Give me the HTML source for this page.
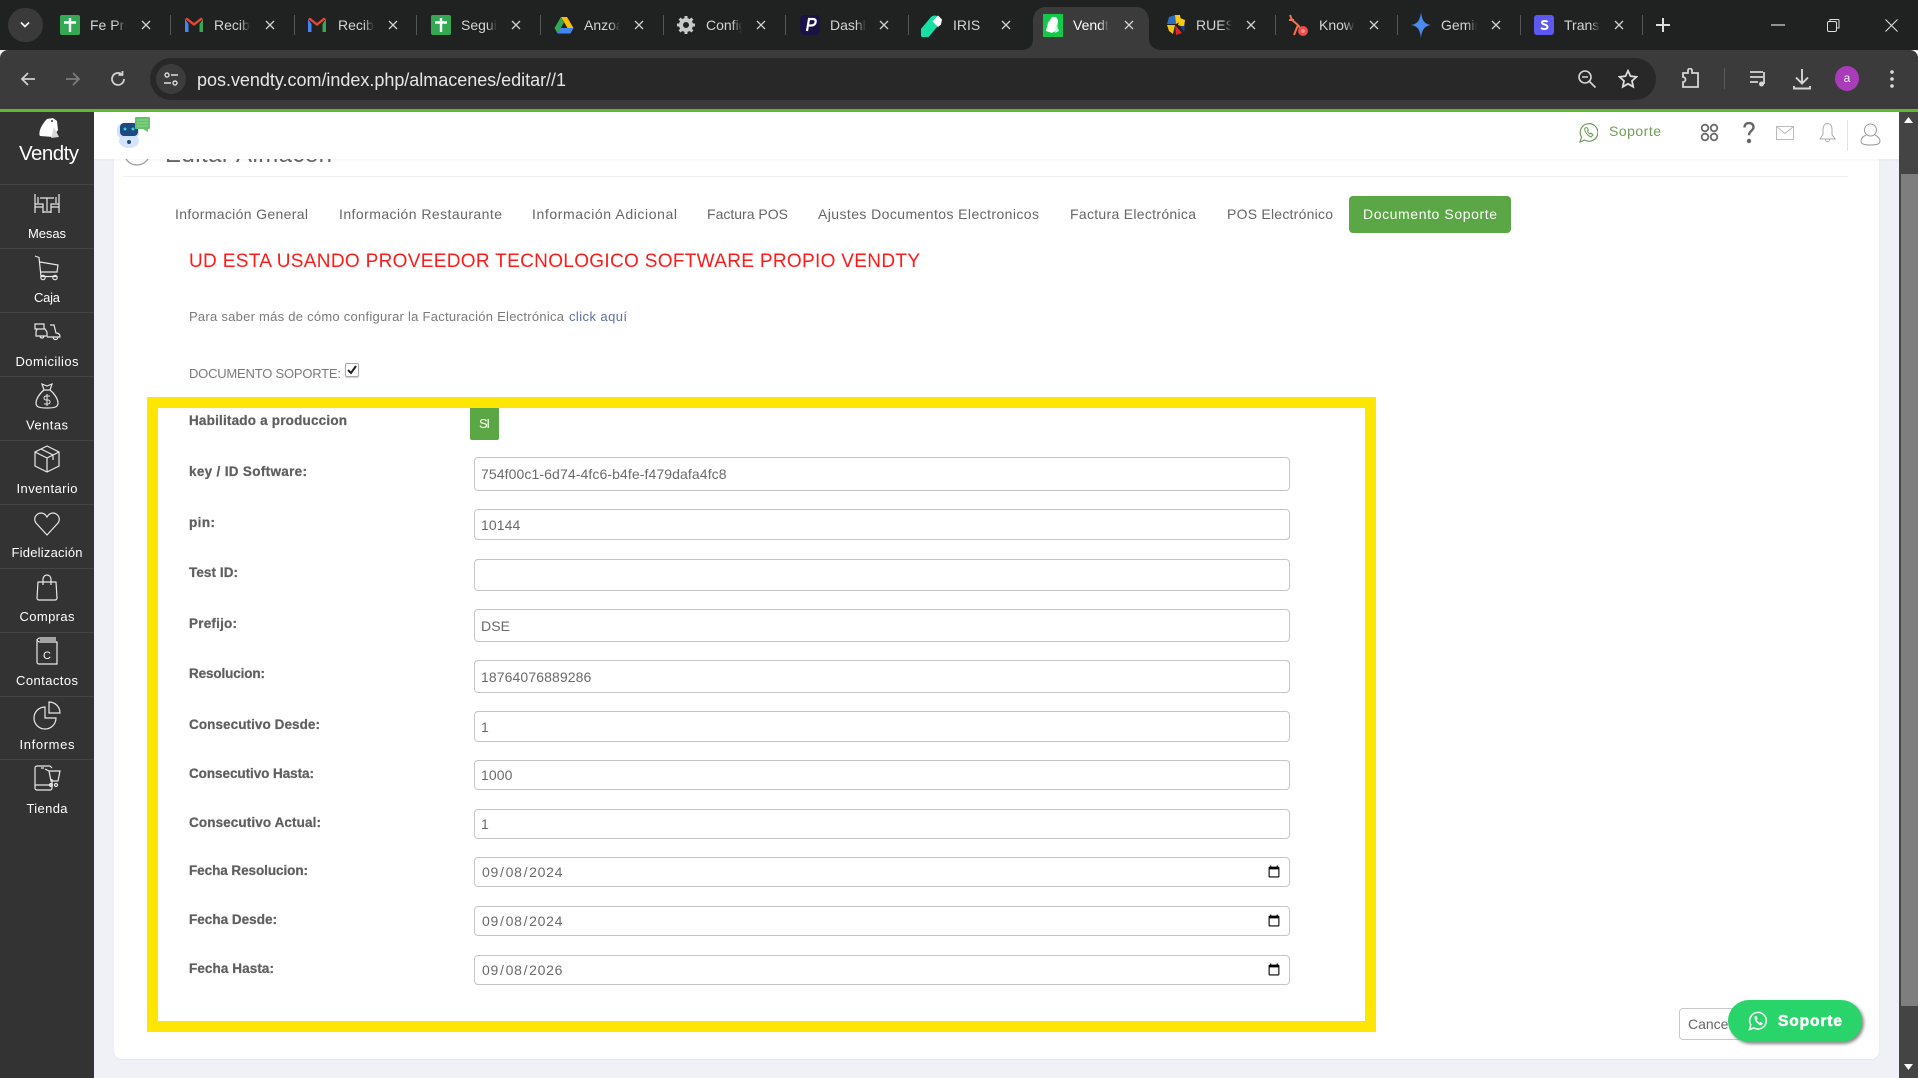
<!DOCTYPE html>
<html lang="es"><head><meta charset="utf-8"><title>Vendty</title>
<style>
html,body{margin:0;padding:0;width:1918px;height:1078px;overflow:hidden;background:#eff1f6;font-family:"Liberation Sans",sans-serif}
.a,svg.a{position:absolute}
#strip{left:0;top:0;width:1918px;height:50px;background:#202221}
#bar{left:0;top:50px;width:1918px;height:59px;background:#3b3b3b;border-radius:8px 8px 0 0}
#green{left:0;top:109px;width:1918px;height:3px;background:#5fbb2e}
#omni{left:150px;top:58px;width:1506px;height:42px;border-radius:21px;background:#282828}
.tt{position:absolute;top:16px;width:36px;height:20px;line-height:19px;font-size:14px;color:#d4d4d4;white-space:nowrap;overflow:hidden;-webkit-mask-image:linear-gradient(90deg,#000 72%,transparent)}
.sep{position:absolute;top:15px;width:1px;height:20px;background:#565656}
#url{left:197px;top:69px;font-size:18px;line-height:22px;color:#e6e6e6;letter-spacing:-.02px;white-space:nowrap}
#side{left:0;top:112px;width:94px;height:966px;background:#333}
#card{left:114px;top:130px;width:1765px;height:929px;background:#fff;border-radius:0 0 8px 8px;box-shadow:0 1px 2px #e4e6ec}
#hdr{left:94px;top:112px;width:1805px;height:47px;background:#fff;box-shadow:0 1px 3px rgba(0,0,0,.05)}
#tabon{left:1349px;top:196px;width:162px;height:37px;background:#5ca745;border-radius:4px}
#yel{left:147px;top:397px;width:1229px;height:635px;box-sizing:border-box;border:solid #ffe600;border-width:11px 11px 11px 11px}
#si{left:470px;top:408px;width:29px;height:32px;background:#5ca745;border-radius:0 0 2px 2px}
input.f{position:absolute;left:474px;width:816px;box-sizing:border-box;margin:0;border:1px solid #c6c6c6;border-radius:4px;background:#fff;padding:0 6px 0;font:14px "Liberation Sans",sans-serif;letter-spacing:.1px;color:#6a6a6a;outline:0}
input.d{letter-spacing:.7px;padding-left:6px;color:#6a6a6a}
input[type=checkbox]{position:absolute;margin:0;left:345px;top:363px;width:14px;height:14px;appearance:none;-webkit-appearance:none;background:#fff;border:1px solid #aaa;border-radius:2px;box-sizing:border-box;box-shadow:0 1px 1px #ccc}
#cancel{left:1679px;top:1008px;width:90px;height:32px;box-sizing:border-box;border:1px solid #c8c8c8;border-radius:4px;background:#fff}
#wa{left:1728px;top:1000px;width:134px;height:42px;border-radius:21px;background:#29d56b;box-shadow:2px 2px 3px #888}
#sb{left:1899px;top:112px;width:19px;height:966px;background:#444}
#th{left:1901px;top:174px;width:17px;height:832px;background:#7e7e7e}
</style></head><body>
<svg width="0" height="0" style="position:absolute"><defs>
<symbol id="x" viewBox="0 0 10 10"><path d="M1 1l8 8M9 1l-8 8" stroke="#d0d0d0" stroke-width="1.3" fill="none"/></symbol>
<symbol id="sheet" viewBox="0 0 20 20"><rect width="20" height="20" rx="2" fill="#34a853"/><path d="M10 3v14M4 7.5h12" stroke="#fff" stroke-width="2.4"/></symbol>
<symbol id="gm" viewBox="0 0 20 20"><path d="M1 4v13h3.5V9z" fill="#4285f4"/><path d="M19 4v13h-3.5V9z" fill="#34a853"/><path d="M1 4l9 7 9-7-2-1.500-7 5.500-7-5.500z" fill="#ea4335"/></symbol>
</defs></svg>

<div class="a" id="strip"></div>
<div class="a" id="bar"></div>
<svg class="a" style="left:1021px;top:7px" width="142" height="43" viewBox="0 0 142 43"><path d="M0 43c8 0 12-4 12-11V14C12 6 17 0 25 0h90c8 0 13 6 13 14v18c0 7 5 11 14 11z" fill="#3b3b3b"/></svg>
<div class="a" style="left:8px;top:8px;width:35px;height:34px;border-radius:17px;background:#3a3a3a"></div>
<svg class="a" style="left:20px;top:21px" width="10" height="8"><path d="M1 1.500l4 4 4-4" fill="none" stroke="#eee" stroke-width="1.800"/></svg>

<!-- favicons -->
<svg class="a" style="left:60px;top:15px" width="20" height="20"><use href="#sheet"/></svg>
<svg class="a" style="left:184px;top:15px" width="20" height="20"><use href="#gm"/></svg>
<svg class="a" style="left:307px;top:15px" width="20" height="20"><use href="#gm"/></svg>
<svg class="a" style="left:431px;top:15px" width="20" height="20"><use href="#sheet"/></svg>
<svg class="a" style="left:554px;top:15px" width="20" height="20" viewBox="0 0 20 20"><path d="M7 2h6l6.500 11h-6z" fill="#fbbc04"/><path d="M7 2L.5 13l3 5.500L10 7.500z" fill="#34a853"/><path d="M3.500 18.500h13l3-5.500H6.500z" fill="#4285f4"/></svg>
<svg class="a" style="left:676px;top:15px" width="20" height="20" viewBox="0 0 20 20"><circle cx="10" cy="10" r="5" fill="none" stroke="#c9c9c9" stroke-width="4"/><path d="M10 1v4M10 15v4M1 10h4M15 10h4M3.600 3.600l3 3M13.400 13.400l3 3M16.400 3.600l-3 3M6.600 13.400l-3 3" stroke="#c9c9c9" stroke-width="3"/></svg>
<svg class="a" style="left:800px;top:15px" width="20" height="20" viewBox="0 0 20 20"><rect width="20" height="20" rx="4" fill="#1a1245"/><path d="M7 16l2-12h4c2 0 3 1 2.600 3.200C15.200 9.500 13.500 10.500 11 10.500H9" fill="none" stroke="#fff" stroke-width="2.200"/></svg>
<svg class="a" style="left:921px;top:14px" width="22" height="23" viewBox="0 0 22 23"><rect x="-4.500" y="7" width="26" height="11" rx="5.500" transform="rotate(-50 9 12)" fill="#18e0a5"/><path d="M11.500 7.500l5.500-6 4 4-1 5-3 2.500z" fill="#fff"/></svg>
<svg class="a" style="left:1043px;top:14px" width="20" height="23" viewBox="0 0 20 23"><rect width="20" height="23" fill="#13c94a"/><path d="M9 3l4 0 2 3-1 10-5 3-6-2L5 9z" fill="#fff"/><path d="M13 9l3 8-4 2z" fill="#cfeedd"/></svg>
<svg class="a" style="left:1166px;top:14px" width="20" height="22" viewBox="0 0 20 22"><path d="M3 3l6-2 1 9H1z" fill="#2a6fc0"/><path d="M9 1h5l1 6-5 3z" fill="#f7c911"/><path d="M14 4l5 2-1 7-6-2z" fill="#f7c911"/><path d="M1 11h8l-2 9-4-3z" fill="#f3c512"/><path d="M9 11l7 8-6 2z" fill="#e3262b"/><path d="M14 12h5l-1 6z" fill="#233b8f"/></svg>
<svg class="a" style="left:1288px;top:14px" width="22" height="23" viewBox="0 0 22 23"><path d="M2 1l2 5 6 5M1 6h5M10 11l4 6M6 21l4-10" stroke="#f0744e" stroke-width="2" fill="none"/><circle cx="15" cy="17" r="5" fill="#ee4b4b"/><circle cx="15" cy="17" r="2" fill="#f58a8a"/></svg>
<svg class="a" style="left:1411px;top:12px" width="20" height="26" viewBox="0 0 20 26"><path d="M10 0c1 8 3 12 10 13-7 1-9 5-10 13-1-8-3-12-10-13 7-1 9-5 10-13z" fill="#4a8bf0"/></svg>
<svg class="a" style="left:1534px;top:15px" width="20" height="20" viewBox="0 0 20 20"><rect width="20" height="20" rx="3" fill="#5b59ef"/><path d="M13.500 7c-.8-1.200-5.500-1.800-5.500.6 0 2.200 5.500 1.400 5.500 4.400 0 2.600-5 2.300-6.500.8" fill="none" stroke="#fff" stroke-width="2"/></svg>

<!-- tab titles -->
<span class="tt" style="left:90px">Fe Pro</span>
<span class="tt" style="left:214px">Recibidos</span>
<span class="tt" style="left:338px">Recibidos</span>
<span class="tt" style="left:461px">Seguimiento</span>
<span class="tt" style="left:584px">Anzoátegui</span>
<span class="tt" style="left:706px">Configuración</span>
<span class="tt" style="left:830px">Dashboard</span>
<span class="tt" style="left:953px">IRIS</span>
<span class="tt" style="left:1073px;color:#fff">Vendty</span>
<span class="tt" style="left:1196px">RUES</span>
<span class="tt" style="left:1319px">Knowledge</span>
<span class="tt" style="left:1441px">Gemini</span>
<span class="tt" style="left:1564px">Transacciones</span>

<!-- tab close -->
<svg class="a" style="left:141px;top:20px" width="10" height="10"><use href="#x"/></svg>
<svg class="a" style="left:265px;top:20px" width="10" height="10"><use href="#x"/></svg>
<svg class="a" style="left:388px;top:20px" width="10" height="10"><use href="#x"/></svg>
<svg class="a" style="left:511px;top:20px" width="10" height="10"><use href="#x"/></svg>
<svg class="a" style="left:634px;top:20px" width="10" height="10"><use href="#x"/></svg>
<svg class="a" style="left:756px;top:20px" width="10" height="10"><use href="#x"/></svg>
<svg class="a" style="left:879px;top:20px" width="10" height="10"><use href="#x"/></svg>
<svg class="a" style="left:1001px;top:20px" width="10" height="10"><use href="#x"/></svg>
<svg class="a" style="left:1124px;top:20px" width="10" height="10"><use href="#x"/></svg>
<svg class="a" style="left:1246px;top:20px" width="10" height="10"><use href="#x"/></svg>
<svg class="a" style="left:1369px;top:20px" width="10" height="10"><use href="#x"/></svg>
<svg class="a" style="left:1491px;top:20px" width="10" height="10"><use href="#x"/></svg>
<svg class="a" style="left:1614px;top:20px" width="10" height="10"><use href="#x"/></svg>

<i class="sep" style="left:170px"></i><i class="sep" style="left:294px"></i><i class="sep" style="left:416px"></i><i class="sep" style="left:540px"></i><i class="sep" style="left:663px"></i><i class="sep" style="left:785px"></i><i class="sep" style="left:908px"></i><i class="sep" style="left:1275px"></i><i class="sep" style="left:1397px"></i><i class="sep" style="left:1520px"></i><i class="sep" style="left:1642px"></i>

<!-- strip controls -->
<svg class="a" style="left:1655px;top:17px" width="16" height="16"><path d="M8 1v14M1 8h14" stroke="#ddd" stroke-width="2"/></svg>
<svg class="a" style="left:1771px;top:24px" width="14" height="2"><path d="M0 1h14" stroke="#ddd" stroke-width="1.200"/></svg>
<svg class="a" style="left:1826px;top:18px" width="14" height="14" viewBox="0 0 14 14"><rect x="1.500" y="3.500" width="9" height="10" rx="1.500" fill="none" stroke="#ddd"/><path d="M4 3V1.500h8a1 1 0 0 1 1 1V10h-2.500" fill="none" stroke="#ddd"/></svg>
<svg class="a" style="left:1885px;top:19px" width="13" height="13"><path d="M.5.5l12 12M12.500.5l-12 12" stroke="#ddd" stroke-width="1.100"/></svg>

<!-- toolbar -->
<svg class="a" style="left:19px;top:70px" width="18" height="18"><path d="M16 9H3M9 3L3 9l6 6" fill="none" stroke="#cfcfcf" stroke-width="1.800"/></svg>
<svg class="a" style="left:64px;top:70px" width="18" height="18"><path d="M2 9h13M9 3l6 6-6 6" fill="none" stroke="#7d7d7d" stroke-width="1.800"/></svg>
<svg class="a" style="left:109px;top:70px" width="18" height="18"><path d="M15 9a6 6 0 1 1-2-4.500M13.500 1v4h-4" fill="none" stroke="#cfcfcf" stroke-width="1.800"/></svg>
<div class="a" id="omni"></div>
<div class="a" style="left:156px;top:64px;width:30px;height:30px;border-radius:15px;background:#3c3c3c"></div>
<svg class="a" style="left:163px;top:71px" width="16" height="16"><circle cx="4" cy="4" r="2" fill="none" stroke="#ddd" stroke-width="1.400"/><path d="M8 4h7M1 12h7" stroke="#ddd" stroke-width="1.400"/><circle cx="12" cy="12" r="2" fill="none" stroke="#ddd" stroke-width="1.400"/></svg>
<div class="a" id="url">pos.vendty.com/index.php/almacenes/editar//1</div>
<svg class="a" style="left:1577px;top:69px" width="20" height="20"><circle cx="8" cy="8" r="6" fill="none" stroke="#d6d6d6" stroke-width="1.600"/><path d="M5 8h6M12.500 12.500l6 6" stroke="#d6d6d6" stroke-width="1.600"/></svg>
<svg class="a" style="left:1618px;top:69px" width="20" height="20" viewBox="0 0 20 20"><path d="M10 1.800l2.500 5.400 5.900.7-4.400 4 1.200 5.800L10 14.800l-5.200 2.900L6 11.900l-4.400-4 5.900-.7z" fill="none" stroke="#dcdcdc" stroke-width="1.800"/></svg>
<svg class="a" style="left:1681px;top:68px" width="20" height="22" viewBox="0 0 20 22"><path d="M2 5h5V2.500a2 2 0 0 1 4 0V5h6v14H2v-5a2.500 2.500 0 0 0 0-5z" fill="none" stroke="#d6d6d6" stroke-width="1.800"/></svg>
<div class="a" style="left:1724px;top:68px;width:1px;height:21px;background:#5c5c5c"></div>
<svg class="a" style="left:1749px;top:70px" width="20" height="18"><path d="M1 2h13M1 7h13M1 12h8" stroke="#d6d6d6" stroke-width="1.800"/><path d="M15 2v12" stroke="#d6d6d6" stroke-width="1.800"/><circle cx="12.500" cy="14" r="2.500" fill="#d6d6d6"/></svg>
<svg class="a" style="left:1792px;top:68px" width="20" height="22"><path d="M10 1v14M4 9.500l6 6 6-6M2 18v2.500h16V18" fill="none" stroke="#d6d6d6" stroke-width="1.900"/></svg>
<div class="a" style="left:1835px;top:66px;width:24px;height:25px;border-radius:50%;background:#a93cb8;color:#eee;font-size:12px;line-height:24px;text-align:center">a</div>
<svg class="a" style="left:1889px;top:69px" width="6" height="20"><circle cx="3" cy="3" r="1.800" fill="#ddd"/><circle cx="3" cy="10" r="1.800" fill="#ddd"/><circle cx="3" cy="17" r="1.800" fill="#ddd"/></svg>
<div class="a" id="green"></div>

<!-- page -->
<div class="a" id="card"></div>
<svg class="a" style="left:114px;top:130px" width="60" height="40"><circle cx="23" cy="22" r="13" fill="none" stroke="#9a9a9a" stroke-width="1.200"/></svg>
<svg class="a" style="left:0;top:0" width="1918" height="1078" font-family="'Liberation Sans',sans-serif">
<text x="165" y="162" font-size="24" fill="#666" textLength="167">Editar Almacén</text>
<path d="M123 176.500H1848" stroke="#efefef"/>
</svg>
<div class="a" id="tabon"></div>
<div class="a" id="yel"></div>
<div class="a" id="si"></div>
<input class="f" style="top:457px;height:34px" value="754f00c1-6d74-4fc6-b4fe-f479dafa4fc8">
<input class="f" style="top:509px;height:31px" value="10144">
<input class="f" style="top:559px;height:32px" value="">
<input class="f" style="top:609px;height:33px" value="DSE">
<input class="f" style="top:660px;height:33px" value="18764076889286">
<input class="f" style="top:711px;height:31px" value="1">
<input class="f" style="top:760px;height:30px" value="1000">
<input class="f" style="top:809px;height:30px" value="1">
<input class="f d" type="date" style="top:857px;height:30px" value="2024-09-08">
<input class="f d" type="date" style="top:906px;height:30px" value="2024-09-08">
<input class="f d" type="date" style="top:955px;height:30px" value="2026-09-08">
<input type="checkbox" checked>
<svg class="a" style="left:345px;top:363px" width="14" height="14"><path d="M3 7l3 3 5-7" fill="none" stroke="#222" stroke-width="2"/></svg>

<svg class="a" style="left:0;top:0" width="1918" height="1078" font-family="'Liberation Sans',sans-serif" font-size="14" fill="#666">
<text x="175" y="219" textLength="133">Información General</text>
<text x="339" y="219" textLength="163">Información Restaurante</text>
<text x="532" y="219" textLength="145">Información Adicional</text>
<text x="707" y="219" textLength="81">Factura POS</text>
<text x="818" y="219" textLength="221">Ajustes Documentos Electronicos</text>
<text x="1070" y="219" textLength="126">Factura Electrónica</text>
<text x="1227" y="219" textLength="106">POS Electrónico</text>
<text x="1363" y="219" textLength="134" fill="#fff">Documento Soporte</text>
<text x="189" y="267" font-size="19" fill="#ff1a1a" textLength="731">UD ESTA USANDO PROVEEDOR TECNOLOGICO SOFTWARE PROPIO VENDTY</text>
<text x="189" y="321" font-size="13" fill="#7a7a7a" textLength="375">Para saber más de cómo configurar la Facturación Electrónica</text>
<text x="569" y="321" font-size="13" fill="#5b6f9f" textLength="58">click aquí</text>
<text x="189" y="378" font-size="13" fill="#7a7a7a" textLength="152">DOCUMENTO SOPORTE:</text>
<g font-weight="700" font-size="13.500" fill="#5f5f5f" stroke="#5f5f5f" stroke-width=".25">
<text x="189" y="425" textLength="158">Habilitado a produccion</text>
<text x="189" y="476" textLength="118">key / ID Software:</text>
<text x="189" y="527" textLength="26">pin:</text>
<text x="189" y="577" textLength="49">Test ID:</text>
<text x="189" y="628" textLength="48">Prefijo:</text>
<text x="189" y="678" textLength="76">Resolucion:</text>
<text x="189" y="729" textLength="131">Consecutivo Desde:</text>
<text x="189" y="778" textLength="125">Consecutivo Hasta:</text>
<text x="189" y="827" textLength="132">Consecutivo Actual:</text>
<text x="189" y="875" textLength="119">Fecha Resolucion:</text>
<text x="189" y="924" textLength="88">Fecha Desde:</text>
<text x="189" y="973" textLength="85">Fecha Hasta:</text>
</g>
<text x="479" y="428" font-size="13" fill="#fff" textLength="11">SI</text>
</svg>

<div class="a" id="cancel"></div>
<svg class="a" style="left:1680px;top:1008px" width="88" height="32"><text x="8" y="21" font-family="'Liberation Sans',sans-serif" font-size="14" fill="#666">Cancelar</text></svg>

<!-- header -->
<div class="a" id="hdr"></div>
<svg class="a" style="left:116px;top:116px" width="36" height="36" viewBox="0 0 36 36"><ellipse cx="13" cy="25" rx="10" ry="7" fill="#d3e4fb"/><rect x="1" y="8" width="22" height="14" rx="5" fill="#cfe2fb"/><rect x="4" y="7" width="18" height="13" rx="4" fill="#1d4a7f"/><circle cx="9" cy="13" r="1.500" fill="#35d1d0"/><circle cx="17" cy="13" r="1.500" fill="#35d1d0"/><circle cx="13" cy="26" r="2" fill="#1d4a7f"/><rect x="19" y="1" width="15" height="12" rx="1" fill="#66c26a"/><path d="M27 13h5v3z" fill="#66c26a"/><path d="M21 4h11M21 7h11M21 10h11" stroke="#8fd592"/></svg>
<svg class="a" style="left:1578px;top:122px" width="20" height="22" viewBox="0 0 20 22"><path d="M2 20l1.500-5a8.800 8.800 0 1 1 3 3z" fill="none" stroke="#6f9e57" stroke-width="1.200"/><path d="M7 6c-1 2 1 7 6 9l2-2-2-2-1 1c-1-.5-2-1.500-2.500-3l1-1-1.500-2.500z" fill="none" stroke="#6f9e57" stroke-width="1"/></svg>
<svg class="a" style="left:1600px;top:119px" width="70" height="24"><text x="9" y="17" font-family="'Liberation Sans',sans-serif" font-size="14" fill="#6f9e57" textLength="52">Soporte</text></svg>
<svg class="a" style="left:1700px;top:123px" width="19" height="19"><g fill="none" stroke="#6a6a6a" stroke-width="1.800"><circle cx="5" cy="5" r="3.300"/><circle cx="14" cy="5" r="3.300"/><circle cx="5" cy="14" r="3.300"/><circle cx="14" cy="14" r="3.300"/></g></svg>
<svg class="a" style="left:1743px;top:122px" width="12" height="22"><path d="M1.500 5.500C1.500 2.500 3.500 1 6 1s4.500 1.500 4.500 4.200c0 3.300-4.500 3.800-4.500 8" fill="none" stroke="#666" stroke-width="2.400"/><circle cx="6" cy="19" r="2.200" fill="#666"/></svg>
<svg class="a" style="left:1776px;top:126px" width="18" height="14"><rect x=".5" y=".5" width="17" height="13" fill="none" stroke="#bbb"/><path d="M.5.500l8.500 7 8.500-7" fill="none" stroke="#bbb"/></svg>
<svg class="a" style="left:1819px;top:122px" width="17" height="22"><path d="M8.500 1.500c-3 0-4.500 3-4.500 6v5L1 17h15l-3-4.500v-5c0-3-1.500-6-4.500-6zM6.500 17.500c0 3 4 3 4 0" fill="none" stroke="#aaa"/></svg>
<div class="a" style="left:1847px;top:120px;width:1px;height:31px;background:#e2e2e2"></div>
<svg class="a" style="left:1860px;top:122px" width="21" height="24"><circle cx="10.500" cy="8" r="6" fill="none" stroke="#999"/><path d="M6 13c-3 1.500-5 3.500-5 6 0 3 3 4 9.500 4s9.500-1 9.500-4c0-2.500-2-4.500-5-6" fill="none" stroke="#999"/></svg>

<!-- sidebar -->
<div class="a" id="side"></div>
<svg class="a" style="left:0;top:0" width="94" height="1078" font-family="'Liberation Sans',sans-serif" font-size="13" fill="#fff" text-anchor="middle">
<path d="M47 119l6-1 4 3 1 9-5 7-13-1c-2-3 1-11 7-17z" fill="#fff"/><path d="M54 127l5 10-8 1z" fill="#d8d8d8"/><circle cx="52" cy="121" r="1" fill="#333"/>
<text x="49" y="160" font-size="20.500" textLength="60">Vendty</text>
<g stroke="#454545"><path d="M0 184.500H94M0 248.500H94M0 312.500H94M0 376.500H94M0 440.500H94M0 504.500H94M0 568.500H94M0 632.500H94M0 696.500H94M0 759.500H94"/></g>
<text x="47" y="238" textLength="38">Mesas</text>
<text x="47" y="302" textLength="26">Caja</text>
<text x="47" y="366" textLength="63">Domicilios</text>
<text x="47" y="429.500" textLength="42">Ventas</text>
<text x="47" y="493" textLength="61">Inventario</text>
<text x="47" y="557" textLength="71">Fidelización</text>
<text x="47" y="621" textLength="55">Compras</text>
<text x="47" y="685" textLength="62">Contactos</text>
<text x="47" y="749" textLength="55">Informes</text>
<text x="47" y="813" textLength="41">Tienda</text>
<g fill="none" stroke="#e8e8e8" stroke-width="1.200">
<!-- mesas -->
<path d="M35 194v19M35 204h8v9M35 207h8M59 194v19M59 204h-8v9M59 207h-8M40 198h14M47 198v13M43 212h8M38 197v6M56 197v6"/>
<!-- caja -->
<path d="M35 256l4 1.500 2 19h16M40 262l18 3-1 7H41"/><circle cx="43" cy="277.500" r="2.200"/><circle cx="55" cy="277.500" r="2.200"/>
<!-- domicilios -->
<path d="M35 324h9v5h-9zM37 329h8l2 3v4H36v-4zM50 325h4l2 8c2 0 4 1 4 4H47M40 336a2 2 0 1 0 4 0M53 337a2.500 2.500 0 1 0 5 0"/>
<!-- ventas -->
<path d="M42 384l5 2 5-2-2 6h-6zM44 390c-4 3-8 9-8 13 0 4 3 5 11 5s11-1 11-5c0-4-4-10-8-13"/><path d="M50 396h-4a2 2 0 0 0 0 4h2a2 2 0 0 1 0 4h-4M47 394v12" stroke-width="1"/>
<!-- inventario -->
<path d="M47 446l12 6v14l-12 6-12-6v-14zM35 452l12 6 12-6M47 458v14M41 449l12 6v5"/>
<!-- fidelizacion -->
<path d="M47 535l-11-12c-5-7 6-15 11-6 5-9 16-1 11 6z"/>
<!-- compras -->
<path d="M38 582h18l1 16a2 2 0 0 1-2 2H39a2 2 0 0 1-2-2zM43 585v-6a4 4 0 0 1 8 0v6" stroke-linejoin="round"/>
<!-- contactos -->
<path d="M56 638H40a3 3 0 0 0-3 3v21a2 2 0 0 0 2 2h18v-22H40a3 3 0 0 1-3-3M40 640h16"/><text x="47" y="659" font-size="11" fill="#fff" stroke="none">C</text>
<!-- informes -->
<path d="M45 707a11 11 0 1 0 11 11H45zM49 702a11 11 0 0 1 11 11H49z"/>
<!-- tienda -->
<path d="M52 779v9a2 2 0 0 1-2 2H37a2 2 0 0 1-2-2v-20a2 2 0 0 1 2-2h13l2 2M35 785h17M41 768l3 0M49 771h11l-2 10h-7zM45 769l4 2"/><circle cx="51" cy="785" r="1.500"/><circle cx="56" cy="785" r="1.500"/>
</g>
</svg>

<!-- scrollbar -->
<div class="a" id="sb"></div>
<div class="a" id="th"></div>
<svg class="a" style="left:1903px;top:116px" width="11" height="8"><path d="M5.500 1L10 7H1z" fill="#fff"/></svg>
<svg class="a" style="left:1903px;top:1063px" width="11" height="8"><path d="M5.500 7L10 1H1z" fill="#fff"/></svg>

<!-- floating -->
<div class="a" id="wa"></div>
<svg class="a" style="left:1748px;top:1011px" width="20" height="20" viewBox="0 0 20 20"><path d="M1.500 18.500l1.300-4.600a8.300 8.300 0 1 1 3 3z" fill="none" stroke="#fff" stroke-width="1.500"/><path d="M7 5c-1.500 2 .5 7.500 6 9.500l2-2-2.500-1.800-1 1c-1.200-.6-2.300-1.800-2.900-3l1-1L8.500 5z" fill="#fff"/></svg>
<svg class="a" style="left:1770px;top:1006px" width="80" height="30"><text x="8" y="20" font-family="'Liberation Sans',sans-serif" font-size="15.500" font-weight="700" fill="#fff" stroke="#fff" stroke-width=".5" textLength="64">Soporte</text></svg>
</body></html>
